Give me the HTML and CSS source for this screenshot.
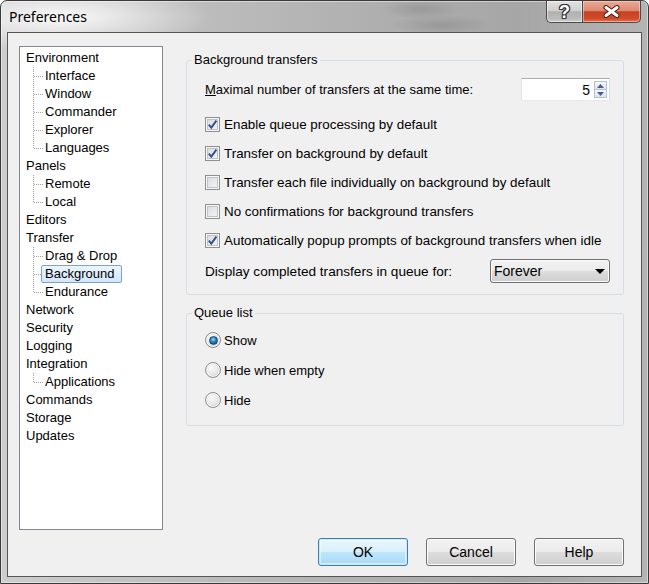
FILE: index.html
```html
<!DOCTYPE html>
<html>
<head>
<meta charset="utf-8">
<title>Preferences</title>
<link rel="stylesheet" href="styles.css">
</head>
<body>
<div class="window">
  <div class="titlebar">
    <span class="title">Preferences</span>
    <div class="caps">
      <div class="cap help"><span class="q">?</span></div>
      <div class="cap close">
        <svg width="19" height="13" viewBox="0 0 19 13"><path d="M4 2.5 L15 10.5 M15 2.5 L4 10.5" stroke="#4b1c10" stroke-width="5" stroke-linecap="round"/><path d="M4 2.5 L15 10.5 M15 2.5 L4 10.5" stroke="#fff" stroke-width="3" stroke-linecap="round"/></svg>
      </div>
    </div>
  </div>
  <div class="client">
    <div class="main">
      <div class="tree">
        <div class="node">Environment</div>
        <div class="kids">
          <div class="kid">Interface</div>
          <div class="kid">Window</div>
          <div class="kid">Commander</div>
          <div class="kid">Explorer</div>
          <div class="kid last">Languages</div>
        </div>
        <div class="node">Panels</div>
        <div class="kids">
          <div class="kid">Remote</div>
          <div class="kid last">Local</div>
        </div>
        <div class="node">Editors</div>
        <div class="node">Transfer</div>
        <div class="kids">
          <div class="kid">Drag &amp; Drop</div>
          <div class="kid"><span class="sel">Background</span></div>
          <div class="kid last">Endurance</div>
        </div>
        <div class="node">Network</div>
        <div class="node">Security</div>
        <div class="node">Logging</div>
        <div class="node">Integration</div>
        <div class="kids">
          <div class="kid last">Applications</div>
        </div>
        <div class="node">Commands</div>
        <div class="node">Storage</div>
        <div class="node">Updates</div>
      </div>
      <div class="pages">
        <fieldset class="group g1">
          <legend>Background transfers</legend>
          <div class="gbody">
            <div class="row-spin">
              <span><u>M</u>aximal number of transfers at the same time:</span>
              <div class="spin">
                <span class="val">5</span>
                <span class="sbtns">
                  <span class="sb"><svg width="7" height="4" viewBox="0 0 7 4"><polygon points="0,4 7,4 3.5,0" fill="#4a5c8c"/></svg></span>
                  <span class="sb"><svg width="7" height="4" viewBox="0 0 7 4"><polygon points="0,0 7,0 3.5,4" fill="#4a5c8c"/></svg></span>
                </span>
              </div>
            </div>
            <div class="checks">
              <div class="chk"><span class="cb on"><svg width="11" height="11" viewBox="0 0 11 11"><path d="M1.8 5.6 L4.3 8.6 L9.4 1.6" fill="none" stroke="#34508a" stroke-width="1.9"/></svg></span>Enable queue processing by default</div>
              <div class="chk"><span class="cb on"><svg width="11" height="11" viewBox="0 0 11 11"><path d="M1.8 5.6 L4.3 8.6 L9.4 1.6" fill="none" stroke="#34508a" stroke-width="1.9"/></svg></span>Transfer on background by default</div>
              <div class="chk"><span class="cb"></span>Transfer each file individually on background by default</div>
              <div class="chk"><span class="cb"></span>No confirmations for background transfers</div>
              <div class="chk"><span class="cb on"><svg width="11" height="11" viewBox="0 0 11 11"><path d="M1.8 5.6 L4.3 8.6 L9.4 1.6" fill="none" stroke="#34508a" stroke-width="1.9"/></svg></span>Automatically popup prompts of background transfers when idle</div>
            </div>
            <div class="row-combo">
              <span>Display completed transfers in queue for:</span>
              <div class="combo">
                <span>Forever</span>
                <svg width="10" height="5" viewBox="0 0 10 5"><polygon points="0,0 10,0 5,5" fill="#000"/></svg>
              </div>
            </div>
          </div>
        </fieldset>
        <fieldset class="group g2">
          <legend>Queue list</legend>
          <div class="gbody">
            <div class="radio"><span class="rb on"><span class="dot"></span></span>Show</div>
            <div class="radio"><span class="rb"></span>Hide when empty</div>
            <div class="radio"><span class="rb"></span>Hide</div>
          </div>
        </fieldset>
      </div>
    </div>
    <div class="buttons">
      <div class="btn def">OK</div>
      <div class="btn">Cancel</div>
      <div class="btn">Help</div>
    </div>
  </div>
</div>
</body>
</html>
```
FILE: styles.css
```css
* { box-sizing: border-box; }
html, body { margin: 0; padding: 0; }
body {
  width: 649px;
  height: 584px;
  overflow: hidden;
  font-family: "Liberation Sans", Arial, sans-serif;
  font-size: 13px;
  color: #000;
  background: #fff;
}
.window {
  width: 649px;
  height: 584px;
  display: flex;
  flex-direction: column;
  border: 1px solid #3a3a3a;
  border-radius: 7px 7px 0 0;
  background:
    radial-gradient(ellipse 150px 34px at 60px 16px, rgba(255,255,255,0.9), rgba(255,255,255,0) 100%),
    radial-gradient(ellipse 40px 10px at 420px 8px, rgba(120,120,120,0.35), rgba(120,120,120,0) 100%),
    radial-gradient(ellipse 50px 10px at 440px 24px, rgba(110,110,110,0.3), rgba(110,110,110,0) 100%),
    linear-gradient(to right, #cdcdcd 0%, #bdbdbd 30%, #aeaeae 60%, #a6a6a6 80%, #b4b4b4 100%);
  box-shadow: inset 0 0 0 1px rgba(255,255,255,0.45);
}
.titlebar {
  height: 31px;
  flex: none;
  display: flex;
  justify-content: space-between;
  align-items: flex-start;
  padding: 0 7px 0 8px;
}
.title {
  font-family: "Noto Sans", "Open Sans", sans-serif;
  font-size: 14px;
  line-height: 20px;
  margin-top: 6px;
  color: #000;
}
.caps { display: flex; height: 22px; }
.cap {
  height: 22px;
  display: flex;
  align-items: center;
  justify-content: center;
  border: 1px solid #4a4a4a;
  border-top: none;
}
.cap.help {
  width: 36px;
  border-right: none;
  border-radius: 0 0 0 5px;
  background: linear-gradient(#e2e2e2, #cfcfcf 45%, #b0b0b0 52%, #bcbcbc 85%, #cfcfcf);
  box-shadow: inset 0 0 0 1px rgba(255,255,255,0.5);
}
.cap.close {
  width: 59px;
  border-radius: 0 0 5px 0;
  background: linear-gradient(#eaa996, #dd8b74 45%, #c7411f 52%, #d14c2b 85%, #e07a58);
  box-shadow: inset 0 0 0 1px rgba(255,220,210,0.5);
}
.q {
  font-family: "Liberation Sans", Arial, sans-serif;
  font-weight: bold;
  font-size: 18px;
  line-height: 18px;
  color: #fff;
  text-shadow: 1px 0 #333, -1px 0 #333, 0 1px #333, 0 -1px #333, 1px 1px #333, -1px -1px #333, 1px -1px #333, -1px 1px #333;
}
.client {
  flex: 1;
  margin: 0 6px 6px 6px;
  border: 1px solid #555;
  background: #f0f0f0;
  padding: 13px 17px 10px 11px;
  display: flex;
  flex-direction: column;
}
.main { display: flex; height: 484px; flex: none; }
.tree {
  width: 144px;
  height: 484px;
  border: 1px solid #828790;
  background: #fff;
  padding: 2px 0 0 6px;
  line-height: 18px;
}
.node, .kid { height: 18px; white-space: nowrap; }
.kid {
  padding-left: 19px;
  background:
    repeating-linear-gradient(to right, #a0a0a0 0 1px, transparent 1px 2px) 8px 9px / 10px 1px no-repeat,
    repeating-linear-gradient(to bottom, #a0a0a0 0 1px, transparent 1px 2px) 7px 0 / 1px 100% no-repeat;
}
.kid.last {
  background-size: 10px 1px, 1px 10px;
}
.sel {
  display: inline-block;
  height: 18px;
  line-height: 16px;
  padding: 0 7px 0 3px;
  margin-left: -4px;
  border: 1px solid #7da2ce;
  border-radius: 2px;
  background: linear-gradient(#ecf5fe, #d3e6fd);
}
.pages {
  margin-left: 23px;
  width: 438px;
  display: flex;
  flex-direction: column;
}
.group {
  margin: 0;
  padding: 0;
  border: 1px solid #d5dfe5;
  border-radius: 3px;
  min-width: 0;
}
.group.g1 { margin-top: 6px; }
.group.g2 { margin-top: 10px; }
.group legend {
  margin-left: 5px;
  padding: 0 2px;
  line-height: 16px;
}
.g1 .gbody { padding: 10px 13px 11px 18px; }
.g2 .gbody { padding: 4px 13px 10px 18px; }
.row-spin {
  display: flex;
  justify-content: space-between;
  align-items: center;
  height: 23px;
}
.spin {
  width: 89px;
  height: 23px;
  display: flex;
  align-items: center;
  border: 1px solid;
  border-color: #abadb3 #dbdfe6 #e3e9ef #e2e3ea;
  background: #fff;
  padding-right: 2px;
}
.spin .val {
  flex: 1;
  text-align: right;
  padding-right: 4px;
  font-size: 14px;
}
.sbtns {
  display: flex;
  flex-direction: column;
  width: 13px;
  height: 17px;
}
.sb {
  flex: 1;
  display: flex;
  align-items: center;
  justify-content: center;
  border: 1px solid #b6c0d2;
  background: linear-gradient(#f6f8fb, #dde4ee);
}
.sb + .sb { border-top: none; }
.checks { margin-top: 9px; }
.chk {
  display: flex;
  align-items: center;
  height: 29px;
  white-space: nowrap;
  font-size: 13.4px;
}
.cb {
  width: 15px;
  height: 15px;
  flex: none;
  margin-right: 4px;
  border: 1px solid #8e8f8f;
  background: linear-gradient(135deg, #d6d9de, #f7f7f7);
  box-shadow: inset 0 0 0 1px #f8f8f8, inset 0 0 0 2px #bfc2c7;
  display: flex;
  align-items: center;
  justify-content: center;
}
.row-combo {
  margin-top: 4px;
  display: flex;
  justify-content: space-between;
  align-items: center;
  height: 24px;
  font-size: 13.6px;
}
.combo {
  width: 120px;
  height: 24px;
  border: 1px solid #707070;
  border-radius: 3px;
  background: linear-gradient(#f2f2f2 0%, #ebebeb 50%, #dddddd 50%, #cfcfcf 100%);
  box-shadow: inset 0 0 0 1px #fbfbfb;
  display: flex;
  align-items: center;
  justify-content: space-between;
  padding: 0 4px 0 3px;
  font-size: 14px;
}
.radio {
  display: flex;
  align-items: center;
  height: 30px;
  white-space: nowrap;
}
.rb {
  width: 16px;
  height: 16px;
  flex: none;
  margin-right: 3px;
  border-radius: 50%;
  border: 1px solid #8e8f8f;
  background: radial-gradient(circle at 40% 35%, #fbfbfb 0%, #e4e4e4 55%, #d0d0d0 80%, #e6e6e6 100%);
  box-shadow: inset 0 0 0 1px #f6f6f6;
  display: flex;
  align-items: center;
  justify-content: center;
}
.dot {
  width: 9px;
  height: 9px;
  border-radius: 50%;
  border: 1px solid #1d4a70;
  background: radial-gradient(circle at 45% 35%, #9fdcff 0%, #2f8fd6 35%, #0c5590 75%, #0a3f6c 100%);
}
.buttons {
  flex: none;
  margin-top: 8px;
  display: flex;
  justify-content: flex-end;
  gap: 18px;
}
.btn {
  width: 90px;
  height: 28px;
  border: 1px solid #707070;
  border-radius: 3px;
  background: linear-gradient(#f2f2f2 0%, #ebebeb 50%, #dddddd 50%, #cfcfcf 100%);
  box-shadow: inset 0 0 0 1px #fcfcfc;
  display: flex;
  align-items: center;
  justify-content: center;
  font-size: 14px;
}
.btn.def {
  border-color: #3c7fb1;
  background: linear-gradient(#eaf6fd 0%, #d9f0fc 50%, #bee6fd 50%, #a7d9f5 100%);
  box-shadow: inset 0 0 0 1px #c6eafb, inset 0 0 0 2px rgba(255,255,255,0.5);
}
```
